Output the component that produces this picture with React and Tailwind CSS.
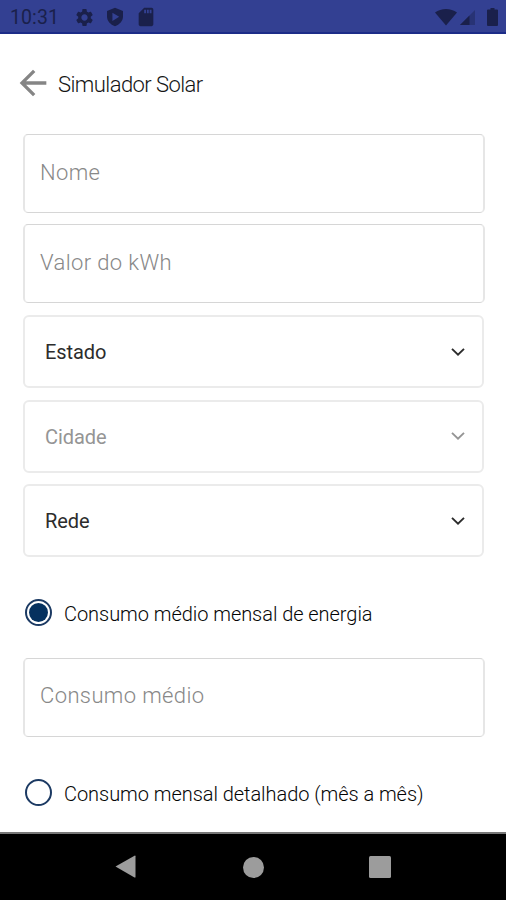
import React from "react";
import { MdSettings, MdSdStorage, MdArrowBack } from "react-icons/md";

function StatusBar() {
  return (
    <header className="flex h-[34px] items-center justify-between border-b-2 border-[#1c2c88] bg-[#334092] pl-[10px] pr-[8px] pt-[2px] text-[#1a204b]">
      <div className="flex items-center">
        <span className="w-[64px] whitespace-nowrap pt-[2px] text-[19.5px] leading-none tracking-[0.1px]">10:31</span>
        <MdSettings className="size-[21px]" />
        <svg className="ml-[11px] h-[20px] w-[18px]" viewBox="0 0 18 20" fill="currentColor" fillRule="evenodd">
          <path d="M9 .8 17 4v5.6c0 4.4-3.4 8.2-8 9.6-4.600-1.400-8-5.200-8-9.600V4zM6.400 5.700v8.200l6.800-4.100z" />
        </svg>
        <MdSdStorage className="ml-[11px] size-[22px]" />
      </div>
      <div className="flex items-center">
        <svg className="h-[18px] w-[22px]" viewBox="0 0 22 18" fill="currentColor">
          <path d="M0 4.500C6-.2 16-.2 22 4.500L11 17.500z" />
        </svg>
        <svg className="ml-[3px] h-[18px] w-[16px]" viewBox="0 0 16 18" fill="currentColor">
          <path d="M0 17 15 2v15z" opacity=".4" />
          <path d="M0 17 9.500 7.500V17z" />
        </svg>
        <svg className="ml-[11px] h-[20px] w-[11px]" viewBox="0 0 11 20" fill="currentColor">
          <path d="M3.500 1h4v1.500H10q1 0 1 1V18q0 1-1 1H1q-1 0-1-1V3.500q0-1 1-1h2.500z" />
        </svg>
      </div>
    </header>
  );
}

function TextField({ label, className = "pb-[3px]" }) {
  return (
    <div
      className={`flex h-[79px] items-center rounded-[5px] border-x-2 border-y-[1.5px] border-x-[#e6e6e6] border-y-[#d6d6d6] px-[15px] text-[22px] font-light tracking-[0.38px] text-[#888888] ${className}`}
    >
      {label}
    </div>
  );
}

function Select({ label, disabled }) {
  return (
    <div
      className={`flex h-[73px] items-center justify-between rounded-[6px] border-2 border-[#ebebeb] pl-5 pr-[17px] text-[20px] tracking-[-0.06px] ${
        disabled ? "text-[#959595]" : "text-[#2c2c2c]"
      }`}
    >
      <span className="pt-px">{label}</span>
      <svg className="h-[8px] w-[14px]" viewBox="0 0 14 8" fill="none" stroke="currentColor" strokeWidth="1.9">
        <path d="M1 .9 7 6.700 13 .9" />
      </svg>
    </div>
  );
}

function Radio({ label, checked }) {
  return (
    <div className="flex h-[28px] items-center pl-[1.5px] text-[20px] font-light tracking-[-0.05px] text-[#050505]">
      <span className="flex size-[27px] items-center justify-center rounded-full border-2 border-[#1c3a63]">
        {checked && <span className="size-[19px] rounded-full bg-[#05315f]" />}
      </span>
      <span className="ml-[12.5px] whitespace-nowrap pt-[4px]">{label}</span>
    </div>
  );
}

export default function App() {
  return (
    <div className="flex h-[900px] w-[506px] flex-col overflow-hidden bg-white font-['Roboto',sans-serif]">
      <StatusBar />
      <main className="flex-1 pl-[23px] pr-[21px]">
        <div className="flex h-[100px] items-center text-[#151515]">
          <MdArrowBack className="-ml-[10px] size-[40px] -translate-y-px text-[#858585]" />
          <h1 className="ml-[5px] text-[22px] font-light tracking-[-0.57px]">Simulador Solar</h1>
        </div>
        <div className="flex flex-col gap-[11px]">
          <TextField label="Nome" />
          <TextField label="Valor do kWh" />
        </div>
        <div className="mr-px mt-[12px] flex flex-col gap-[11.500px]">
          <Select label="Estado" />
          <Select label="Cidade" disabled />
          <Select label="Rede" />
        </div>
        <div className="pb-[32px] pt-[41px]">
          <Radio label="Consumo médio mensal de energia" checked />
        </div>
        <TextField label="Consumo médio" className="pb-[4px]" />
        <div className="pt-[41px]">
          <Radio label="Consumo mensal detalhado (mês a mês)" />
        </div>
      </main>
      <nav className="flex h-[68px] items-center justify-between border-t-2 border-[#777777] bg-black pl-[115px] pr-[115px] text-[#9c9c9c]">
        <svg className="h-[24px] w-[21px]" viewBox="0 0 21 24" fill="currentColor">
          <path d="M.5 11.500 19.500.7q1-.4 1 .6v20.600q0 1-1 .5z" />
        </svg>
        <span className="ml-[1px] size-[21px] rounded-full bg-[#9c9c9c]" />
        <span className="size-[22px] rounded-[1.5px] bg-[#9c9c9c]" />
      </nav>
    </div>
  );
}
